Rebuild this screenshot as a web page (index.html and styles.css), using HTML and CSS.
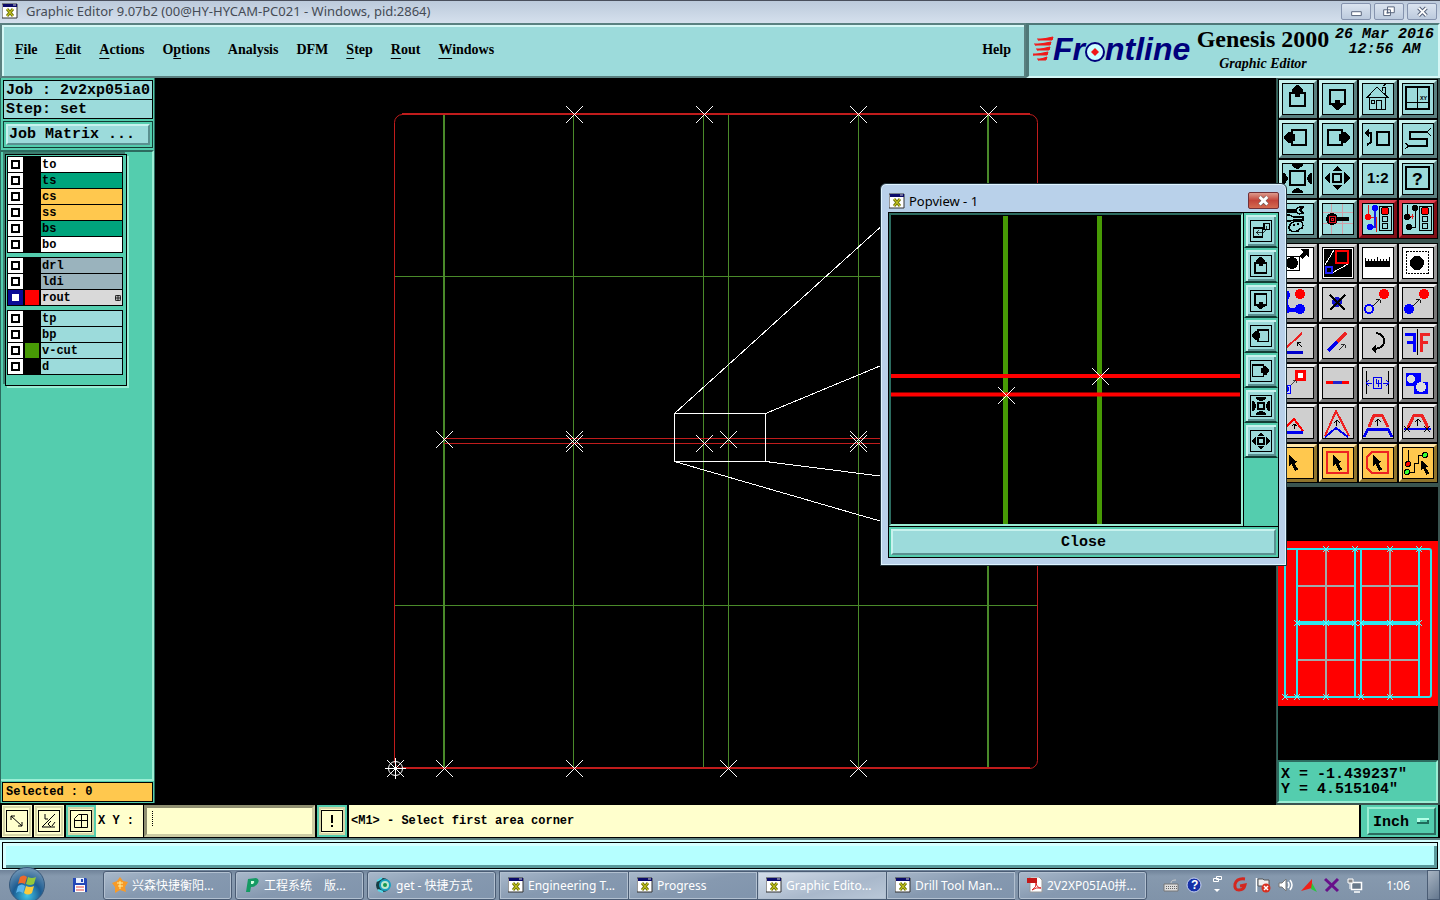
FILE: index.html
```html
<!DOCTYPE html>
<html lang="en">
<head>
    <meta charset="UTF-8">
    <meta name="viewport" content="width=device-width, initial-scale=1.0">
    <title>Graphic Editor</title>
    <link rel="stylesheet" href="styles.css">
</head>
<body>
    <!-- shared icons -->
    <svg class="defs" aria-hidden="true">
        <symbol id="app" viewBox="0 0 16 16">
            <path d="M0 1h15v14H0z" fill="#fff" stroke="#333"/><path d="M1 1h14v3H1z" fill="#0a0a6a"/><path d="M11 2h3" stroke="#ccc"/>
            <path d="M5 6l6 7M11 6l-6 7" stroke="#777a10" stroke-width="3"/><path d="M5 6l6 7M11 6l-6 7" stroke="#d8d820" stroke-width="1"/>
        </symbol>
        <symbol id="mark" viewBox="-9 -9 18 18"><path d="M-8-8l17 17M9-8l-17 17" stroke="#fff" fill="none"/></symbol>
        <symbol id="up" viewBox="0 0 32 32"><path d="M8 10h15v13H8z" fill="none" stroke="#000" stroke-width="2"/><path d="M15 2h1l5 4v3h-3v5h-5V9h-3V6z"/></symbol>
        <symbol id="down" viewBox="0 0 32 32"><path d="M8 7h15v14H8z" fill="none" stroke="#000" stroke-width="2"/><path d="M15 27h1l5-4v-3h-3v-3h-5v3h-3v3z"/></symbol>
        <symbol id="left" viewBox="0 0 32 32"><path d="M10 7h14v15H10z" fill="none" stroke="#000" stroke-width="2"/><path d="M2 14v1l4 5h3v-2h4v-7H9V9H6z"/></symbol>
        <symbol id="right" viewBox="0 0 32 32"><path d="M6 7h14v15H6z" fill="none" stroke="#000" stroke-width="2"/><path d="M28 14v1l-4 5h-3v-2h-4v-7h4V9h3z"/></symbol>
        <symbol id="zin" viewBox="0 0 32 32"><path d="M8 8h15v14H8z" fill="none" stroke="#000" stroke-width="2"/><path d="M10 1h11v2l-5 3h-1l-5-3zM10 30h11v-2l-5-3h-1l-5 3zM1 10v11h2l3-5v-1l-3-5zM30 10v11h-2l-3-5v-1l3-5z"/></symbol>
        <symbol id="zinsmall" viewBox="0 0 32 32"><path d="M12 12h8v8h-8z" fill="none" stroke="#000" stroke-width="2"/><path d="M9 4h14v2l-6 4h-2L9 6zM9 28h14v-2l-6-4h-2l-6 4zM4 9v14h2l4-6v-2L6 9zM28 9v14h-2l-4-6v-2l4-6z"/></symbol>
        <symbol id="zout" viewBox="0 0 32 32"><path d="M11 11h8v8h-8z" fill="none" stroke="#000" stroke-width="2"/><path d="M15 3l5 5h-10zM15 27l5-5h-10zM2 15l6-6v12zM28 15l-6-6v12z"/></symbol>
        <symbol id="ptr" viewBox="0 0 12 18"><path d="M1 0l9 8-3 1 4 7-3 2-4-8-3 3z"/></symbol>
        <symbol id="arr" viewBox="0 0 9 9"><path d="M0 8l7-7M3 1h5v4" fill="none" stroke="#000"/></symbol>
    </svg>

    <div class="titlebar">
        <svg class="ico"><use href="#app"/></svg>
        <span class="title">Graphic Editor 9.07b2 (00@HY-HYCAM-PC021 - Windows, pid:2864)</span>
        <button class="win" aria-label="Minimize"><svg viewBox="0 0 29 15"><path d="M10 8h10v4H10z" fill="#fff" stroke="#55627a"/></svg></button>
        <button class="win" aria-label="Restore"><svg viewBox="0 0 29 15"><path d="M13 3h7v6h-7zM9 6h7v6H9z" fill="#fff" stroke="#55627a"/><path d="M12 8h2v2h-2z" fill="#55627a"/></svg></button>
        <button class="win" aria-label="Close window"><svg viewBox="0 0 29 15"><path d="M11 4l8 8M19 4l-8 8" stroke="#55627a" stroke-width="4"/><path d="M11 4l8 8M19 4l-8 8" stroke="#fff" stroke-width="2"/></svg></button>
    </div>

    <header class="header">
        <nav class="menu">
            <a href="#"><u>F</u>ile</a>
            <a href="#"><u>E</u>dit</a>
            <a href="#"><u>A</u>ctions</a>
            <a href="#">O<u>p</u>tions</a>
            <a href="#">Analysis</a>
            <a href="#">DFM</a>
            <a href="#"><u>S</u>tep</a>
            <a href="#"><u>R</u>out</a>
            <a href="#"><u>W</u>indows</a>
            <a href="#" class="help">Help</a>
        </nav>
        <div class="brand">
            <svg class="logo" viewBox="0 0 162 34">
                <path d="M20 5l-1 3H5zM18 10l-1 3H2zM17 15l-1 3H4zM15 20l-1 3H0zM14 25l-1 3H5z" fill="#f01818" stroke="#f01818"/>
                <path d="M4 7h16M1 12h17M3 17h14M0 22h15M4 27h9" stroke="#f01818"/>
                <text x="20" y="28">Fr</text>
                <circle cx="62" cy="20" r="9" fill="#cff" stroke="#00007c" stroke-width="2"/>
                <path d="M62 16l4 4-4 4-4-4z" fill="#f01818"/>
                <text x="72" y="28">ntline</text>
            </svg>
            <div class="product">
                <div class="name">Genesis 2000</div>
                <div class="sub">Graphic Editor</div>
            </div>
            <div class="clock">26 Mar 2016<br>12:56 AM</div>
        </div>
    </header>

    <main class="main">
        <aside class="side">
            <div class="jobs">
                <div class="field">Job : 2v2xp05ia0</div>
                <div class="field">Step: set</div>
            </div>
            <div class="matrix"><button>Job Matrix ...</button></div>
            <div class="layers">
                <div class="list">
                    <div class="group">
                        <label class="layer"><input type="checkbox"><i class="swatch"></i><span class="white">to</span></label>
                        <label class="layer"><input type="checkbox"><i class="swatch"></i><span class="green">ts</span></label>
                        <label class="layer"><input type="checkbox"><i class="swatch"></i><span class="orange">cs</span></label>
                        <label class="layer"><input type="checkbox"><i class="swatch"></i><span class="orange">ss</span></label>
                        <label class="layer"><input type="checkbox"><i class="swatch"></i><span class="green">bs</span></label>
                        <label class="layer"><input type="checkbox"><i class="swatch"></i><span class="white">bo</span></label>
                    </div>
                    <div class="group">
                        <label class="layer"><input type="checkbox"><i class="swatch"></i><span class="gray">drl</span></label>
                        <label class="layer"><input type="checkbox"><i class="swatch"></i><span class="gray">ldi</span></label>
                        <label class="layer"><input type="checkbox" checked><i class="swatch red"></i><span class="light">rout<svg class="plus" viewBox="0 0 5 5"><path d="M.5.5h4v4h-4zM2.5 0v5M0 2.5h5" fill="none" stroke="#000" stroke-width=".7"/></svg></span></label>
                    </div>
                    <div class="group">
                        <label class="layer"><input type="checkbox"><i class="swatch"></i><span>tp</span></label>
                        <label class="layer"><input type="checkbox"><i class="swatch"></i><span>bp</span></label>
                        <label class="layer"><input type="checkbox"><i class="swatch lime"></i><span>v-cut</span></label>
                        <label class="layer"><input type="checkbox"><i class="swatch"></i><span>d</span></label>
                    </div>
                </div>
            </div>
            <div class="selected">Selected : 0</div>
        </aside>

        <!-- panel drawing -->
        <svg class="canvas" viewBox="155 78 1121 727" preserveAspectRatio="xMinYMin meet">
            <g fill="none" stroke="#4a8a2a">
                <path d="M573.5 114v654M703.5 114v654M728.5 114v654M858.5 114v654M395 276.5h642M395 605.5h642"/>
                <path d="M444 114v654M988 114v654" stroke-width="2"/>
            </g>
            <g fill="none" stroke="#c01c1c">
                <rect x="394.5" y="114.5" width="643" height="654" rx="8"/>
                <path d="M402 114h628M402 768h628" stroke-width="2"/>
                <path d="M444 438.5h544M444 443.5h544"/>
            </g>
            <path d="M674.5 413.5h91v48h-91zM674.5 413.5L880 227.500M765.500 413.500L880 366M765.500 461.500L880 476M674.500 461.500L880 521" fill="none" stroke="#fff" shape-rendering="crispEdges"/>
            <g>
                <use href="#mark" x="565" y="105" width="18" height="18"/><use href="#mark" x="695" y="105" width="18" height="18"/>
                <use href="#mark" x="849" y="105" width="18" height="18"/><use href="#mark" x="979" y="105" width="18" height="18"/>
                <use href="#mark" x="435" y="430" width="18" height="18"/><use href="#mark" x="565" y="430" width="18" height="18"/>
                <use href="#mark" x="565" y="434" width="18" height="18"/><use href="#mark" x="695" y="434" width="18" height="18"/>
                <use href="#mark" x="719" y="430" width="18" height="18"/><use href="#mark" x="849" y="430" width="18" height="18"/>
                <use href="#mark" x="849" y="434" width="18" height="18"/><use href="#mark" x="435" y="759" width="18" height="18"/>
                <use href="#mark" x="565" y="759" width="18" height="18"/><use href="#mark" x="719" y="759" width="18" height="18"/>
                <use href="#mark" x="849" y="759" width="18" height="18"/><use href="#mark" x="386" y="759" width="18" height="18"/>
            </g>
            <circle cx="395.500" cy="768.500" r="7" fill="none" stroke="#fff"/>
            <path d="M385 768.500h21M395.500 758v21" stroke="#fff"/>
        </svg>

        <aside class="tools">
            <div class="grid">
                <button aria-label="Pan up"><svg><use href="#up"/></svg></button>
                <button aria-label="Pan down"><svg><use href="#down"/></svg></button>
                <button aria-label="Home"><svg viewBox="0 0 32 32"><path d="M5 14.500L15 4l11 10.500zM7.500 15v11h16V15M14.500 26v-9h5v9M9.500 17.500h3v3h-3zM20 8V4h3v7M21 3l3-2" fill="none" stroke="#000"/></svg></button>
                <button aria-label="Coordinates view"><svg viewBox="0 0 32 32"><path d="M4 4h23v22H4z" fill="none" stroke="#000" stroke-width="2"/><path d="M15.500 4v22M4 19.500h22" stroke="#000"/><text x="18" y="17" class="tiny">XY</text></svg></button>
                <button aria-label="Pan left"><svg><use href="#left"/></svg></button>
                <button aria-label="Pan right"><svg><use href="#right"/></svg></button>
                <button aria-label="Previous view"><svg viewBox="0 0 32 32"><path d="M15 9h12v13H15zM5 10h4v9l-4 3" fill="none" stroke="#000" stroke-width="2"/><path d="M2 10l5-4v8z"/></svg></button>
                <button aria-label="Serpentine"><svg viewBox="0 0 32 32"><path d="M25 9H8v7h17v7H7" fill="none" stroke="#000" stroke-width="2"/><path d="M25 9l4-4M25 9l4 4M7 23l-4-3M7 23l-4 3" stroke="#000"/></svg></button>
                <button aria-label="Zoom in"><svg><use href="#zin"/></svg></button>
                <button aria-label="Zoom out"><svg><use href="#zout"/></svg></button>
                <button><svg viewBox="0 0 32 32"><text x="5" y="20" class="ratio">1:2</text></svg></button>
                <button aria-label="Query"><svg viewBox="0 0 32 32"><path d="M4 4h23v22H4z" fill="none" stroke="#000" stroke-width="2"/><text x="10" y="22" class="query">?</text></svg></button>
                <button aria-label="Setup"><svg viewBox="0 0 32 32"><path d="M0 7h14q2-4 7-3l-3 3 3 3q-5 2-7-1H0M0 12h7l5 2h9v3h-9l-4 1H0M7 24q2-6 9-6 7 1 4 7-2 0-4 3-9 2-9-4z" fill="none" stroke="#000" stroke-width="1.500"/><circle cx="12" cy="22" r="1"/><circle cx="16" cy="21" r="1"/></svg></button>
                <button aria-label="Highlight"><svg viewBox="0 0 32 32"><path d="M9.500 1v30M20.500 1v30M1 9.500h30M1 20.500h30" stroke="#d0a0a8"/><path d="M10 14h17v4H10z"/><circle cx="10" cy="16" r="6"/><path d="M7 13h6v6H7zM9 15h2v2H9z" fill="none" stroke="#e01020"/></svg></button>
                <button class="alert" aria-label="Check connection"><svg viewBox="0 0 32 32"><path d="M6 2v12h8v15M6 2v12" fill="none" stroke="#e02020"/><path d="M13 5v19H8" fill="none" stroke="#1818f0" stroke-width="1.500"/><circle cx="13" cy="5" r="3" fill="#00f"/><circle cx="6" cy="14" r="3" fill="red"/><circle cx="8" cy="24" r="3" fill="#00f"/><path d="M17.500 3.500h12v24h-12z" fill="none" stroke="#000"/><g fill="none" stroke="#000"><circle cx="23" cy="8" r="4" fill="red"/><circle cx="23" cy="16" r="3"/><circle cx="23" cy="23" r="3"/></g></svg></button>
                <button class="alert" aria-label="Check spacing"><svg viewBox="0 0 32 32"><path d="M5.500 2v12M13.500 2v22H8M5 14h4" fill="none" stroke="#000"/><path d="M7 11v5M10 11v5M7 13h5" stroke="#e02020"/><circle cx="13" cy="5" r="3"/><circle cx="5" cy="14" r="3"/><circle cx="7" cy="24" r="3"/><path d="M17.500 3.500h12v24h-12z" fill="none" stroke="#000"/><g fill="none" stroke="#000"><circle cx="23" cy="8" r="4" fill="red"/><circle cx="23" cy="16" r="3"/><circle cx="23" cy="23" r="3"/></g></svg></button>
            </div>
            <div class="grid edit">
                <button class="paper" aria-label="Resize pad"><svg viewBox="0 0 32 32"><path d="M3.500 9.500h14v14h-14z" fill="none" stroke="#000"/><circle cx="10" cy="16" r="6"/><path d="M17 9l4-4-2-3h8v8l-3-2-4 4" /></svg></button>
                <button class="paper" aria-label="Popview"><svg viewBox="0 0 32 32"><path d="M2 2h28v28H2z"/><path d="M3 18L12 3M10 26l16-9" stroke="#fff"/><path d="M14 4h12v12H14z" fill="none" stroke="red" stroke-width="2"/><path d="M4 20h6v6H4z" fill="none" stroke="#22f" stroke-width="2"/></svg></button>
                <button class="paper" aria-label="Measure"><svg viewBox="0 0 32 32"><path d="M3 14h25v6H3z"/><path d="M3.500 11v5M6.500 12v5M9.500 12v5M12.500 12v5M15.500 10v6M18.500 12v5M21.500 12v5M24.500 12v5M27.500 10v6" stroke="#000"/></svg></button>
                <button class="paper" aria-label="Select pad"><svg viewBox="0 0 32 32"><path d="M4.500 4.500h22v22h-22z" fill="none" stroke="#000" stroke-dasharray="2 1"/><circle cx="15" cy="16" r="7"/></svg></button>
                <button aria-label="Move chain"><svg viewBox="0 0 32 32"><path d="M4 7v16h14" fill="none" stroke="#00f" stroke-width="4"/><circle cx="3" cy="8" r="5" fill="#00f"/><circle cx="3" cy="22" r="5" fill="#00f"/><circle cx="18" cy="22" r="5" fill="#00f"/><circle cx="18" cy="7" r="5" fill="red"/></svg></button>
                <button aria-label="Delete"><svg viewBox="0 0 32 32"><circle cx="15" cy="15" r="5" fill="#11c"/><path d="M8 8l15 15M23 8L8 23" stroke="#000" stroke-width="2"/></svg></button>
                <button aria-label="Move"><svg viewBox="0 0 32 32"><circle cx="22" cy="7" r="5" fill="red"/><circle cx="7" cy="22" r="4" fill="none" stroke="#00f" stroke-width="2"/><use href="#arr" x="11" y="12" width="8" height="8"/></svg></button>
                <button aria-label="Copy"><svg viewBox="0 0 32 32"><circle cx="22" cy="7" r="5" fill="red"/><circle cx="7" cy="22" r="5" fill="#00f"/><use href="#arr" x="11" y="12" width="8" height="8"/></svg></button>
                <button aria-label="Rotate line"><svg viewBox="0 0 32 32"><path d="M1 25h20" stroke="#00c" stroke-width="3"/><path d="M1 24L20 6" stroke="#e22" stroke-width="2"/><path d="M20 20l-5-5M15 19v-4h4" fill="none" stroke="#000"/></svg></button>
                <button aria-label="Extend line"><svg viewBox="0 0 32 32"><path d="M6 24l9-9" stroke="#00e" stroke-width="3"/><path d="M15 15l9-9" stroke="#e22" stroke-width="3"/><use href="#arr" x="17" y="17" width="7" height="7"/></svg></button>
                <button aria-label="Rotate"><svg viewBox="0 0 32 32"><path d="M14 6q8 1 8 8 0 7-9 8" fill="none" stroke="#000" stroke-width="2"/><path d="M14 18l-5 4 5 4z"/></svg></button>
                <button aria-label="Mirror"><svg viewBox="0 0 32 32"><path d="M15.500 2v26" stroke="#000"/><path d="M3 7h9v18M12 15H5" fill="none" stroke="#00f" stroke-width="3"/><path d="M28 7h-9v18M19 15h7" fill="none" stroke="#e22" stroke-width="3"/></svg></button>
                <button aria-label="Scale"><svg viewBox="0 0 32 32"><path d="M14 4h8v8h-8z" fill="#fff" stroke="red" stroke-width="3"/><path d="M1 18h7v8H1z" fill="#ccf" stroke="#00f"/><circle cx="4" cy="22" r="3" fill="#00f"/><use href="#arr" x="9" y="13" width="6" height="6"/></svg></button>
                <button aria-label="Stretch"><svg viewBox="0 0 32 32"><path d="M4 15h23" stroke="red" stroke-width="3"/><path d="M11 15h9" stroke="#22c" stroke-width="3"/></svg></button>
                <button aria-label="Spacing"><svg viewBox="0 0 32 32"><path d="M4.500 4v23M26.500 4v23" stroke="#000"/><path d="M4 16h6M21 16h6M7 13l-3 3 3 3M24 13l3 3-3 3M11.500 10.500h8v11h-8zM14.500 12v4h4M16.500 13v7" fill="none" stroke="#00e"/></svg></button>
                <button aria-label="Merge"><svg viewBox="0 0 32 32"><path d="M4 6h15v9H26v12H12v-8H4z" fill="#00f"/><circle cx="9" cy="12" r="4" fill="#ddd"/><circle cx="19" cy="20" r="5" fill="#ddd"/></svg></button>
                <button aria-label="Low arc"><svg viewBox="0 0 32 32"><path d="M0 25h21" stroke="#00e" stroke-width="3"/><path d="M1 23l11-11 9 12" fill="none" stroke="red" stroke-width="2"/><path d="M12.500 22v-5M10 19l2-2 3 2" fill="none" stroke="#000"/></svg></button>
                <button aria-label="Raise corner"><svg viewBox="0 0 32 32"><path d="M3 30l11-9 12 9" fill="none" stroke="#00e" stroke-width="2"/><path d="M3 29L14 4l13 25" fill="none" stroke="#e22" stroke-width="2"/><path d="M14.500 19v-6M12 16l3-3 3 3" fill="none" stroke="#000"/></svg></button>
                <button aria-label="Raise edge"><svg viewBox="0 0 32 32"><path d="M2 30l4-8h20l4 8" fill="none" stroke="#00e" stroke-width="3"/><path d="M7 20l5-12h8l6 12" fill="none" stroke="#e22" stroke-width="3"/><path d="M15.500 19v-7M13 15l3-3 3 3" fill="none" stroke="#000"/></svg></button>
                <button aria-label="Move edge"><svg viewBox="0 0 32 32"><path d="M2 22h27" stroke="#00e" stroke-width="2"/><path d="M6 21l6-13h8l6 13" fill="none" stroke="#e22" stroke-width="3"/><path d="M15.500 19v-7M13 15l3-3 3 3M2 19l6 6M8 19l-6 6M22 19l6 6M28 19l-6 6" fill="none" stroke="#000"/></svg></button>
                <button class="gold" aria-label="Select"><svg viewBox="0 0 32 32"><use href="#ptr" x="6" y="7" width="11" height="18"/></svg></button>
                <button class="gold" aria-label="Select in box"><svg viewBox="0 0 32 32"><path d="M5 5h21v21H5z" fill="none" stroke="#e22" stroke-width="2"/><use href="#ptr" x="10" y="7" width="11" height="18"/></svg></button>
                <button class="gold" aria-label="Select in polygon"><svg viewBox="0 0 32 32"><path d="M5 10l5-5h16v21H10l-5-5z" fill="none" stroke="#e22" stroke-width="2"/><use href="#ptr" x="10" y="7" width="11" height="18"/></svg></button>
                <button class="gold" aria-label="Select net"><svg viewBox="0 0 32 32"><path d="M6.500 3v12M6 25.500h6.500v-9h4v-8h7" fill="none" stroke="#000"/><g stroke="#000"><circle cx="6" cy="17" r="2.500" fill="red"/><circle cx="5" cy="25" r="2.500" fill="#3f3"/><circle cx="23" cy="8" r="2.500" fill="#3f3"/></g><use href="#ptr" x="18" y="13" width="10" height="15"/></svg></button>
            </div>

            <!-- overview of the whole panel -->
            <div class="overview">
                <svg viewBox="0 0 160 165">
                    <path d="M0 0h160v165H0z" fill="#f00"/>
                    <g fill="none" stroke="#a0aaaa" stroke-width="2">
                        <path d="M19 45h58M84 45h58M19 119h58M84 119h58M48 8v148M112 8v148"/>
                    </g>
                    <g fill="none" stroke="#30e4ec" stroke-width="2">
                        <rect x="7" y="8" width="146" height="148" rx="2"/>
                        <path d="M19 8v148M77 8v148M83 8v148M141 8v148"/>
                        <path d="M19 82h58M83 82h58" stroke-width="4"/>
                    </g>
                    <path d="M45 5l6 6m0-6l-6 6M74 5l6 6m0-6l-6 6M109 5l6 6m0-6l-6 6M138 5l6 6m0-6l-6 6M16 79l6 6m0-6l-6 6M45 79l6 6m0-6l-6 6M74 79l6 6m0-6l-6 6M80 79l6 6m0-6l-6 6M109 79l6 6m0-6l-6 6M138 79l6 6m0-6l-6 6M4 153l6 6m0-6l-6 6M16 153l6 6m0-6l-6 6M45 153l6 6m0-6l-6 6M80 153l6 6m0-6l-6 6M109 153l6 6m0-6l-6 6" fill="none" stroke="#5ff"/>
                </svg>
            </div>
            <div class="coords">X = -1.439237"<br>Y = 4.515104"</div>
        </aside>

        <section class="popview" aria-label="Popview">
            <div class="pophead">
                <svg class="ico"><use href="#app"/></svg>
                <span class="title">Popview - 1</span>
                <button aria-label="Close Popview"><svg viewBox="0 0 30 16"><path d="M11 4l8 8M19 4l-8 8" stroke="#555" stroke-width="4"/><path d="M11 4l8 8M19 4l-8 8" stroke="#fff" stroke-width="3"/></svg></button>
            </div>
            <div class="popbody">
                <svg class="popcanvas" viewBox="890 215 350 309" preserveAspectRatio="none">
                    <path d="M1004.500 216v308M1098.500 216v308" stroke="#479a05" stroke-width="5"/>
                    <path d="M890 376h349M890 394.500h349" stroke="#f00" stroke-width="4"/>
                    <use href="#mark" x="996" y="386" width="18" height="18"/><use href="#mark" x="1090" y="367" width="18" height="18"/>
                </svg>
                <div class="poptools">
                    <button aria-label="Copy view"><svg viewBox="3 3 26 26"><path d="M6 12h12v12H6zM20 6h7v8h-7z" fill="none" stroke="#000" stroke-width="2"/><path d="M23 10v5l-4 3h-8M14 15l-4 3 4 3" fill="none" stroke="#000"/></svg></button>
                    <button aria-label="Popview up"><svg viewBox="3 1 26 26"><use href="#up" width="32" height="32"/></svg></button>
                    <button aria-label="Popview down"><svg viewBox="3 3 26 26"><use href="#down" width="32" height="32"/></svg></button>
                    <button aria-label="Popview left"><svg viewBox="1 2 26 26"><use href="#left" width="32" height="32"/></svg></button>
                    <button aria-label="Popview right"><svg viewBox="4 2 26 26"><use href="#right" width="32" height="32"/></svg></button>
                    <button aria-label="Popview zoom in"><svg viewBox="3 3 26 26"><use href="#zinsmall" width="32" height="32"/></svg></button>
                    <button aria-label="Popview zoom out"><svg viewBox="1 1 28 28"><use href="#zout" width="32" height="32"/></svg></button>
                </div>
            </div>
            <div class="popfoot"><button>Close</button></div>
        </section>
    </main>

    <div class="command">
        <button class="cmd" aria-label="Snap diagonal"><svg viewBox="0 0 20 20"><path d="M4 5l11 10M4 9V5h4M15 11v4h-4" fill="none" stroke="#000"/></svg></button>
        <button class="cmd" aria-label="Snap angle"><svg viewBox="0 0 20 20"><path d="M3 16L16 3M3 16h13M6 3v5h3M12 10l-3 3 3 3M16 11l-3 4" fill="none" stroke="#000"/></svg></button>
        <button class="cmd on" aria-label="Snap grid"><svg viewBox="0 0 20 20"><path d="M3.500 16.500v-9l4-4h9v13zM10.500 3v14M3 9.500h14" fill="none" stroke="#000"/></svg></button>
        <label class="xy" for="xy">X Y :</label>
        <input class="entry" id="xy" type="text">
        <button class="cmd on" aria-label="Apply"><svg viewBox="0 0 20 20"><path d="M9 4h2v8H9zM9 14h2v2H9z"/></svg></button>
        <div class="hint">&lt;M1&gt; - Select first area corner</div>
        <div class="units">
            <select aria-label="Units"><option>Inch</option><option>MM</option></select>
        </div>
    </div>
    <div class="message"><div></div></div>

    <footer class="taskbar">
        <button class="start" aria-label="Start"><svg viewBox="0 0 36 36">
            <defs><radialGradient id="orb" cx=".5" cy=".8" r=".8"><stop offset="0" stop-color="#3fc6e8"/><stop offset=".5" stop-color="#1c5c92"/><stop offset="1" stop-color="#789ab8"/></radialGradient></defs>
            <circle cx="18" cy="18" r="17.500" fill="url(#orb)" stroke="#36597c"/>
            <path d="M11 10q4-3 7 0l-2 7q-4-2-7 0z" fill="#ec6a2c"/><path d="M19 10q4 2 8 0l-2 7q-4 2-8 0z" fill="#94c83c"/>
            <path d="M9 19q4-3 7 0l-2 7q-4-3-7 0z" fill="#5cb4ec"/><path d="M17 19q4 2 8 0l-2 7q-4 3-8 0z" fill="#fccb3c"/>
        </svg></button>
        <button class="save" aria-label="Save"><svg viewBox="0 0 16 16"><path d="M1 1h13l1 1v13H1z" fill="#2448b8"/><path d="M4 1h8v5H4z" fill="#e8f0ff"/><path d="M9 2h2v3H9z" fill="#2448b8"/><path d="M3 8h10v7H3z" fill="#fff"/><path d="M4 10h8M4 13h8" stroke="#d44"/></svg></button>
        <div class="tasks">
            <button><svg viewBox="0 0 16 16"><path d="M8 0l3 4 5 1-3 5 1 5-6-2-5 3V10L0 6l5-2z" fill="#f79a28"/><path d="M5 6h6M8 4v8M6 9h5" stroke="#fff2a0"/></svg>兴森快捷衡阳...</button>
            <button><svg viewBox="0 0 16 16"><path d="M4 2l8-1q4 1 2 5-2 4-7 4l-1 5H2z" fill="#159a63"/><path d="M7 4h3q1 1-1 3H7z" fill="#d2ffe0"/></svg>工程系统　版...</button>
            <button><svg viewBox="0 0 16 16"><circle cx="7" cy="8" r="7" fill="#153c42"/><circle cx="9" cy="8" r="5" fill="#bde8d0" stroke="#18a0c0" stroke-width="2"/><circle cx="9" cy="8" r="2" fill="#1a9850"/><path d="M1 4l5-3M2 13l5 2" stroke="#58d8e8" stroke-width="2"/></svg>get - 快捷方式</button>
            <div class="stack">
                <button><svg><use href="#app"/></svg>Engineering T...</button>
                <button><svg><use href="#app"/></svg>Progress</button>
                <button class="active"><svg><use href="#app"/></svg>Graphic Edito...</button>
                <button><svg><use href="#app"/></svg>Drill Tool Man...</button>
            </div>
            <button><svg viewBox="0 0 16 16"><path d="M3 0h9l3 3v12H3z" fill="#fff" stroke="#999"/><path d="M0 1h10v5H0z" fill="#c41818"/><path d="M5 13q5-3 4-7 1 5 5 5-5-1-9 2" fill="none" stroke="#d22"/></svg>2V2XP05IA0拼...</button>
        </div>
        <div class="tray">
            <svg viewBox="0 0 16 16"><path d="M1 7h14v7H1z" fill="#ddd" stroke="#777"/><path d="M3 9.500h11M3 11.500h11" stroke="#666" stroke-dasharray="1 1"/><path d="M8 6q0-3 5-3" fill="none" stroke="#ccc"/></svg>
            <svg viewBox="0 0 16 16"><circle cx="8" cy="8" r="7" fill="#1630a8" stroke="#c4d0f0"/><text x="5" y="12" class="ask">?</text></svg>
            <svg viewBox="0 0 16 24"><path d="M7.500 3.500h5v3h-5zM4.500 5.500h5v3h-5z" fill="#8294a8" stroke="#fff"/><path d="M5 16h6l-3 3z" fill="#fff"/></svg>
            <svg viewBox="0 0 16 16"><path d="M13 2q-8-1-10 5-1 6 4 6 5 0 6-5l-5 1" fill="none" stroke="#d32820" stroke-width="3"/></svg>
            <svg viewBox="0 0 16 16"><path d="M1.500 1v14" stroke="#fff" stroke-width="1.500"/><path d="M3 2h5l1 1h5v7H8L7 9H3z" fill="#eee" stroke="#555"/><circle cx="11" cy="11" r="4.500" fill="#d83020"/><path d="M9 9l4 4m0-4l-4 4" stroke="#fff" stroke-width="1.500"/></svg>
            <svg viewBox="0 0 16 16"><path d="M1 6h3l4-4v12l-4-4H1z" fill="#fff" stroke="#777"/><path d="M10 5q2 3 0 6M12 3q4 5 0 10" fill="none" stroke="#fff" stroke-width="1.500"/></svg>
            <svg viewBox="0 0 16 16"><path d="M0 14L11 2v9z" fill="#f02018"/><path d="M11 6l5 9-6-3z" fill="#28c840"/></svg>
            <svg viewBox="0 0 16 16"><path d="M1 2l13 12M14 2L2 14" stroke="#68108a" stroke-width="3"/></svg>
            <svg viewBox="0 0 16 16"><path d="M4.500 5.500h10v7h-10zM7 15h6" fill="#69798a" stroke="#fff" stroke-width="1.500"/><path d="M1 2h5v4H1zM3 6v6" fill="#888" stroke="#fff"/></svg>
        </div>
        <span class="time">1:06</span>
        <button class="desktop" aria-label="Show desktop"></button>
    </footer>
</body>
</html>
```
FILE: styles.css
```css
*{
    box-sizing: border-box;
}
body{
    margin: 0;
    height: 100vh;
    display: flex;
    flex-direction: column;
    background: #000;
    color: #000;
    font: bold 15px "Liberation Mono", monospace;
    overflow: hidden;
}
button,input,select{
    font: inherit;
    color: inherit;
    margin: 0;
    padding: 0;
    border: 0;
    border-radius: 0;
    background: none;
}
svg{
    display: block;
}
.defs{
    position: absolute;
    width: 0;
    height: 0;
}
.ico{
    width: 16px;
    height: 16px;
}
/* title bar */
.titlebar{
    height: 23px;
    display: flex;
    align-items: center;
    gap: 3px;
    padding: 0 3px 2px 2px;
    border-top: 1px solid #4a4f5c;
    background: linear-gradient(#bccadb, #d5e0ed);
    font: 13px "Noto Sans", "Noto Sans CJK SC", sans-serif;
    color: #454b55;
}
.titlebar .title{
    flex: 1;
    padding-left: 5px;
}
.win{
    width: 30px;
    height: 17px;
    border: 1px solid #8593ae;
    border-radius: 2px;
    background: linear-gradient(#dbe4f0, #bccadd);
}
/* header */
.header{
    height: 55px;
    display: flex;
    background: #9cdbdb;
}
.menu{
    flex: 1;
    display: flex;
    align-items: center;
    gap: 18px;
    padding: 0 13px 2px;
    border: 2px solid #5a8080;
    box-shadow: inset 2px 2px #d5f8f6;
    font: bold 14px "Liberation Serif", serif;
}
.menu a{
    color: #000;
    text-decoration: none;
}
.menu u{
    text-underline-offset: 4px;
    text-decoration-thickness: 1px;
}
.menu .help{
    margin-left: auto;
}
.brand{
    width: 414px;
    display: flex;
    border: 2px solid #d5f8f6;
    border-top-color: #4f7878;
    border-left: 3px solid #4f7878;
}
.logo{
    width: 162px;
    height: 34px;
    margin: 7px 0 0 4px;
    flex: none;
}
.logo text{
    font: italic bold 32px "Liberation Sans", sans-serif;
    fill: #00007c;
}
.product{
    width: 136px;
    text-align: center;
    font-family: "Liberation Serif", serif;
}
.name{
    font-size: 24px;
    line-height: 28px;
    white-space: nowrap;
}
.sub{
    font-size: 14px;
    line-height: 22px;
    font-style: italic;
}
.clock{
    flex: 1;
    padding-top: 2px;
    text-align: center;
    font-style: italic;
    line-height: 15px;
    white-space: nowrap;
}
/* main area */
.main{
    position: relative;
    flex: 1;
    min-height: 0;
    display: flex;
}
.side{
    width: 155px;
    flex: none;
    display: flex;
    flex-direction: column;
    background: #54cdae;
    border-left: 1px solid #2c6b5f;
    border-right: 1px solid #2c6b5f;
    margin-bottom: 2px;
}
.jobs{
    padding: 2px 1px 0 2px;
}
.field{
    height: 20px;
    margin-bottom: -1px;
    padding-left: 2px;
    border: 1px solid #000;
    background: #9cdbdb;
    line-height: 20px;
    white-space: nowrap;
    overflow: hidden;
}
.matrix{
    margin: 3px 1px 0 2px;
    padding: 2px;
    border: 1px solid #123c34;
}
.matrix button{
    display: block;
    width: 100%;
    height: 21px;
    padding-left: 1px;
    border: 2px solid #c8f2ee;
    border-right-color: #5a9090;
    border-bottom-color: #5a9090;
    background: #9cdbdb;
    text-align: left;
    line-height: 17px;
}
.layers{
    flex: 1;
    margin-top: 2px;
    padding: 2px 0 0 4px;
    border: 2px solid #9aeed4;
    border-top-color: #2c6b5f;
    border-left: 0;
}
.list{
    width: 122px;
    padding: 1px 3px 6px 1px;
    border: 1px solid #000;
    box-shadow: 2px 2px #9aeed4, -2px -2px #3b7f70;
}
.group{
    margin-bottom: 4px;
    padding-top: 1px;
    background: #000;
}
.layer{
    height: 16px;
    display: flex;
    padding: 0 1px 1px 1px;
    font-size: 12px;
    line-height: 14px;
}
.layer input{
    appearance: none;
    width: 15px;
    height: 15px;
    border: 3px solid #fff;
    background: #fff;
    box-shadow: inset 0 0 0 2px #000;
}
.layer input:checked{
    border-width: 4px;
    border-color: #0a0a96;
    box-shadow: none;
}
.swatch{
    width: 14px;
    margin: 0 2px;
    background: #000;
}
.red{
    background: #f00;
}
.lime{
    background: #479a05;
}
.layer span{
    flex: 1;
    display: flex;
    justify-content: space-between;
    align-items: center;
    padding: 0 1px;
    background: #9cdbdb;
}
.layer .white{
    background: #fff;
}
.layer .green{
    background: #00a47c;
}
.layer .orange{
    background: #ffc84e;
}
.layer .gray{
    background: #9ab3bd;
}
.layer .light{
    background: #d9d9d9;
}
.plus{
    width: 6px;
    height: 6px;
}
.selected{
    margin: 1px;
    height: 20px;
    padding-left: 3px;
    border: 1px solid #000;
    background: #ffc84e;
    font-size: 12px;
    line-height: 18px;
}
.canvas{
    flex: 1;
    min-width: 0;
    height: 100%;
}
/* right tools */
.tools{
    width: 164px;
    flex: none;
    display: flex;
    flex-direction: column;
    padding: 1px 2px 2px 1px;
    background: #3a5450;
}
.grid{
    display: grid;
    grid-template-columns: repeat(4, 38px);
    gap: 2px;
    padding: 1px;
    background: #000;
    border-left: 1px solid #2c6b5f;
}
.edit{
    margin-top: 4px;
}
.grid button{
    width: 38px;
    height: 38px;
    border: 3px solid #c8f2ee;
    border-right-color: #5a8080;
    border-bottom-color: #5a8080;
    background: #9cdbdb;
}
.grid svg{
    width: 32px;
    height: 32px;
    box-shadow: inset 0 0 0 1px #000;
    shape-rendering: crispEdges;
}
.tiny{
    font: bold 6px "Liberation Mono", monospace;
}
.ratio{
    font: bold 15px "Liberation Sans", sans-serif;
}
.query{
    font: bold 18px "Liberation Mono", monospace;
}
.grid .alert{
    border-color: #e04050 #801018 #801018 #e04050;
    background: #b02030;
}
.alert svg{
    background: #9cdbdb;
}
.edit button{
    border-color: #eee #777 #777 #eee;
    background: #cfcfcf;
}
.edit .paper{
    border-color: #ddd #999 #999 #ddd;
    background: #fff;
}
.edit .gold{
    border-color: #ffe6a8 #8f742c #8f742c #ffe6a8;
    background: #ffc84e;
}
.overview{
    flex: 1;
    display: flex;
    align-items: center;
    margin-top: 4px;
    background: #000;
    border-left: 1px solid #2c6b5f;
}
.overview svg{
    width: 100%;
}
.coords{
    height: 43px;
    padding: 5px 2px;
    border: 2px solid #9aeed4;
    border-top-color: #2c6b5f;
    border-left-color: #2c6b5f;
    background: #54cdae;
    line-height: 15px;
}
/* popview floats over the drawing */
.popview{
    position: absolute;
    top: 105px;
    right: 153px;
    width: 407px;
    padding: 0 7px 7px;
    border: 1px solid #203038;
    border-radius: 6px 6px 0 0;
    box-shadow: inset 0 0 0 1px #dff4ff;
    background: #b9d1ea;
}
.pophead{
    height: 28px;
    display: flex;
    align-items: center;
    gap: 4px;
    padding: 5px 0 0 1px;
    font: 13px "Noto Sans", "Noto Sans CJK SC", sans-serif;
}
.pophead .title{
    flex: 1;
}
.pophead button{
    width: 31px;
    height: 17px;
    border: 1px solid #703038;
    border-radius: 2px;
    background: linear-gradient(#dd9a8c, #c3453a 50%, #d46a50);
}
.popbody{
    display: flex;
    height: 315px;
    border: 1px solid #000;
    background: #54cdae;
}
.popcanvas{
    flex: 1;
    min-width: 0;
    height: 313px;
    background: #000;
    border: 2px solid #9aeed4;
    border-top-color: #2c6b5f;
    border-left-color: #2c6b5f;
}
.poptools{
    width: 35px;
    border-left: 1px solid #000;
}
.poptools button{
    display: block;
    width: 34px;
    height: 35px;
    padding: 3px;
    border: 2px solid #54cdae;
    border-bottom-color: #123c34;
    box-shadow: inset 2px 2px #c8f2ee, inset -2px -2px #5a9090;
    background: #9cdbdb;
}
.poptools svg{
    width: 22px;
    height: 22px;
    margin: 0 auto;
    border: 1px solid #000;
    shape-rendering: crispEdges;
}
.popfoot{
    padding: 2px;
    border: 1px solid #000;
    border-top: 0;
    background: #54cdae;
}
.popfoot button{
    display: block;
    width: 100%;
    height: 26px;
    border: 2px solid #c8f2ee;
    border-right-color: #5a9090;
    border-bottom-color: #5a9090;
    background: #9cdbdb;
}
/* command line */
.command{
    height: 33px;
    display: flex;
    gap: 2px;
    padding: 0 2px 1px;
    background: #000;
    font-size: 12px;
}
.cmd{
    width: 30px;
    padding: 3px;
    border: 1px solid #ffffcd;
    box-shadow: inset 0 0 0 2px #d6d6a8;
    background: #ffffcd;
}
.cmd svg{
    width: 22px;
    height: 22px;
    border: 1px solid #000;
}
.on{
    border: 2px solid #54cdae;
    padding: 2px;
}
.xy{
    width: 47px;
    margin-left: -2px;
    padding-left: 2px;
    background: #ffffcd;
    line-height: 33px;
    white-space: nowrap;
}
.entry{
    width: 171px;
    margin-left: -1px;
    padding: 0 6px;
    border: 3px solid #cccca4;
    border-top-color: #8f8f70;
    border-left-color: #8f8f70;
    background: repeating-linear-gradient(#000 0 1px, #ffffcd 1px 2px) no-repeat 5px 3px / 1px 15px #ffffcd;
}
.hint{
    flex: 1;
    padding-left: 2px;
    background: #ffffcd;
    line-height: 33px;
}
.units{
    width: 77px;
    padding: 2px 2px 2px 6px;
    background: #54cdae;
}
.units select{
    appearance: none;
    display: block;
    width: 100%;
    height: 28px;
    padding: 2px 0 0 4px;
    border: 2px solid #9aeed4;
    border-right-color: #2c6b5f;
    border-bottom-color: #2c6b5f;
    background:
        linear-gradient(#54cdae, #54cdae) no-repeat right 7px center / 7px 2px,
        linear-gradient(170deg, #b4ffe6 50%, #1f6b5c 50%) no-repeat right 5px center / 12px 6px;
    font-size: 15px;
}
.message{
    height: 32px;
    padding: 2px 2px 3px;
    border-top: 2px solid #5a8080;
    background: #d5ffff;
}
.message div{
    height: 27px;
    border: 1px solid #000;
    box-shadow: inset 3px 3px #d5ffff, inset -3px -3px #5a9a9c;
    background: #b5ffff;
}
/* taskbar */
.taskbar{
    height: 30px;
    display: flex;
    align-items: center;
    background: linear-gradient(#6f8299, #8699ae 20%, #8093a9);
    font: 12px "Noto Sans", "Noto Sans CJK SC", sans-serif;
    color: #fff;
}
.start{
    width: 36px;
    margin: 0 0 0 9px;
    flex: none;
}
.save{
    width: 16px;
    margin: 0 15px 0 27px;
}
.tasks{
    display: flex;
    gap: 3px;
    height: 29px;
}
.tasks button{
    width: 129px;
    display: flex;
    align-items: center;
    gap: 4px;
    padding-left: 8px;
    border: 1px solid #4a5c74;
    border-radius: 3px;
    box-shadow: inset 0 0 0 1px #b2c0d0;
    background: linear-gradient(165deg, #a9b9cb, #8699b0 50%, #8094ac);
    white-space: nowrap;
    overflow: hidden;
}
.tasks svg{
    width: 16px;
    height: 16px;
    flex: none;
}
.stack{
    display: flex;
}
.stack button{
    border-right-width: 0;
    border-radius: 0;
}
.tasks .active{
    background: linear-gradient(165deg, #d4deea, #a9b8cb 60%, #bac8d8);
}
.tray{
    flex: 1;
    display: flex;
    justify-content: flex-end;
    align-items: center;
    gap: 7px;
}
.tray svg{
    width: 16px;
    height: 24px;
}
.ask{
    font: bold 12px "Liberation Sans", sans-serif;
    fill: #fff;
}
.time{
    padding: 0 17px 0 23px;
}
.desktop{
    width: 13px;
    height: 30px;
    border: 1px solid #4a5c74;
    background: linear-gradient(135deg, #a8b4c2, #65788f);
}
```
